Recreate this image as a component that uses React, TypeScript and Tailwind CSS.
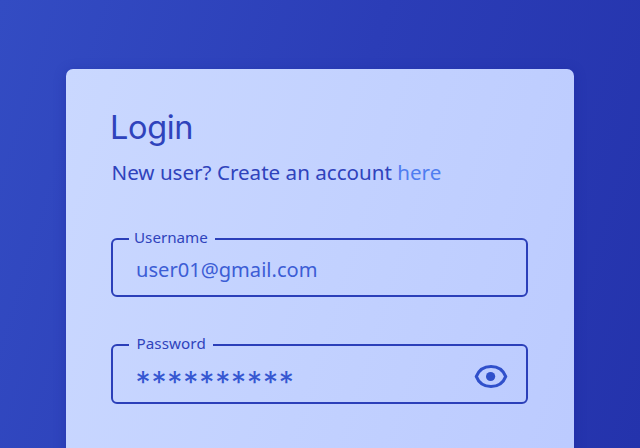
import type { ReactNode } from "react";

function Field({ label, fieldClass, legendClass, children }: { label: string; fieldClass: string; legendClass: string; children: ReactNode }) {
  return (
    <fieldset className={`w-[417px] rounded-[6px] border-2 border-[#2b3fb9] pl-[16px] ${fieldClass}`}>
      <legend className={`h-[20px] text-[15.200px] leading-[16px] whitespace-nowrap ${legendClass}`}>{label}</legend>
      {children}
    </fieldset>
  );
}

function EyeIcon() {
  return (
    <svg width="34" height="26" viewBox="0 0 34 26" fill="none" className="mt-[9px] mr-[18px] shrink-0">
      <path d="M2.300 12.500C5 5.500 10.500 2.500 17 2.500S29 5.500 31.700 12.500C29 19.500 23.500 22.500 17 22.500S5 19.500 2.300 12.500Z" stroke="#3050cb" strokeWidth="3.200" strokeLinejoin="round" />
      <circle cx="16.600" cy="12.500" r="4.600" fill="#3050cb" />
    </svg>
  );
}

export default function App() {
  return (
    <main className="flex h-[448px] w-full justify-center overflow-hidden bg-[linear-gradient(107deg,#334cc3_0%,#2b3db7_50%,#2433ac_100%)] pt-[69px] font-['Noto_Sans',sans-serif] text-[#2f43bc]">
      <section className="h-[520px] w-[508px] rounded-t-[7px] bg-[linear-gradient(107deg,#cad8ff_0%,#c2d1ff_50%,#bbcaff_100%)] pl-[45px] shadow-[0_2px_12px_rgba(24,35,150,0.35)]">
        <h1 className="-ml-px pt-[39px] font-['Inter',sans-serif] text-[32.500px] leading-[40px] font-normal tracking-[-0.350px]">Login</h1>
        <p className="mt-[9px] pl-[0.500px] text-[20.600px] leading-[30px] whitespace-nowrap">
          New user? Create an account <a className="text-[#4f7df0]">here</a>
        </p>
        <div className="mt-[42px] flex flex-col gap-[38px]">
          <Field label="Username" fieldClass="h-[68px]" legendClass="w-[86px] pl-[5px]">
            <div className="mt-[7px] pl-[7px] text-[20.100px] leading-[28px] text-[#3c5dd5]">user01@gmail.com</div>
          </Field>
          <Field label="Password" fieldClass="h-[69px]" legendClass="w-[84px] pl-[7.500px] tracking-[0.080px]">
            <div className="flex justify-between pl-[6.500px]">
              <div className="mt-[13px] font-['Inter',sans-serif] text-[30px] leading-[28px] tracking-[0.900px] text-[#3557d1]">**********</div>
              <EyeIcon />
            </div>
          </Field>
        </div>
      </section>
    </main>
  );
}
